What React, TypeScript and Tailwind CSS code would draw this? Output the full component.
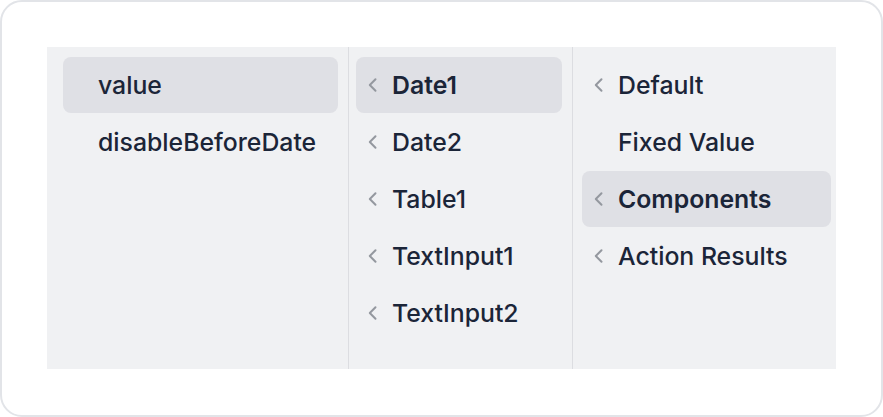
import React from "react";

const Chevron = () => (
  <svg width="10" height="16" viewBox="0 0 10 16" className="shrink-0">
    <polyline points="8.5,2.2 2.8,8 8.5,13.8" fill="none" stroke="#94989f" strokeWidth="2" strokeLinecap="round" strokeLinejoin="round" />
  </svg>
);

type Item = { label: string; chevron?: boolean; active?: boolean; bold?: boolean };

const Row = ({ item, hasChevronCol }: { item: Item; hasChevronCol: boolean }) => (
  <div
    className={`flex items-center h-[56px] rounded-[8px] ${item.active ? "bg-[#dfe0e5]" : ""} ${item.bold ? "font-semibold" : "font-medium"} ${hasChevronCol ? "pl-[11px]" : "pl-[35px]"}`}
  >
    {hasChevronCol && (
      <div className="w-[25px] flex items-center">{item.chevron ? <Chevron /> : null}</div>
    )}
    <span className="text-[24.8px] leading-none text-[#1b2538]">{item.label}</span>
  </div>
);

export default function App() {
  const col1: Item[] = [{ label: "value", active: true }, { label: "disableBeforeDate" }];
  const col2: Item[] = [
    { label: "Date1", chevron: true, active: true, bold: true },
    { label: "Date2", chevron: true },
    { label: "Table1", chevron: true },
    { label: "TextInput1", chevron: true },
    { label: "TextInput2", chevron: true },
  ];
  const col3: Item[] = [
    { label: "Default", chevron: true },
    { label: "Fixed Value" },
    { label: "Components", chevron: true, active: true, bold: true },
    { label: "Action Results", chevron: true },
  ];
  return (
    <div className="w-[883px] h-[417px] bg-white" style={{ fontFamily: "Inter, 'Noto Sans', sans-serif" }}>
      <div className="w-full h-full border-2 border-[#e2e4e8] rounded-[22px] p-[45px]">
        <div className="flex h-[322px] bg-[#f0f1f3]">
          <div className="w-[302px] border-r border-[#dcdde1] pt-[10px] pl-[16px] pr-[10px] flex flex-col gap-[1px]">
            {col1.map((i) => (
              <Row key={i.label} item={i} hasChevronCol={false} />
            ))}
          </div>
          <div className="w-[224px] border-r border-[#dcdde1] pt-[10px] pl-[7px] pr-[10px] flex flex-col gap-[1px]">
            {col2.map((i) => (
              <Row key={i.label} item={i} hasChevronCol={true} />
            ))}
          </div>
          <div className="flex-1 pt-[10px] pl-[9px] pr-[5px] flex flex-col gap-[1px]">
            {col3.map((i) => (
              <Row key={i.label} item={i} hasChevronCol={true} />
            ))}
          </div>
        </div>
      </div>
    </div>
  );
}
